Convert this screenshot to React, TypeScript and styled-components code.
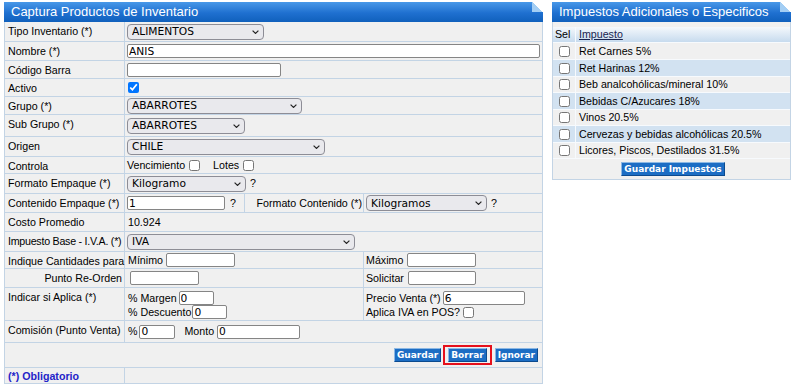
import React from 'react';
import styled, { createGlobalStyle } from 'styled-components';

const line = '#c3d4e5';
const cellBg = '#f0f0f0';
const inputFont = `8pt "DejaVu Sans", Verdana, sans-serif`;

const GlobalStyle = createGlobalStyle`
  body {
    margin: 2px 0 0 4px;
    background: #fff;
    font-family: "Liberation Sans", Arial, sans-serif;
    font-size: 8pt;
    line-height: 13px;
    color: #000;
  }
`;

const Page = styled.div`
  display: flex;
  align-items: flex-start;
  gap: 9px;
`;

const Panel = styled.div<{ $w: number }>`
  width: ${({ $w }) => $w}px;
  flex: none;
`;

const Header = styled.div`
  position: relative;
  height: 20px;
  line-height: 20px;
  padding-left: 7px;
  color: #fff;
  font-size: 13px;
  white-space: nowrap;
  background: linear-gradient(#4898e8, #1f70d0 55%, #1060bc);

  &::after {
    content: '';
    position: absolute;
    top: 0;
    right: 0;
    width: 11px;
    height: 10px;
    background: linear-gradient(to bottom left, #fff 50%, #a3cef4 50%);
  }
`;

const Body = styled.div`
  border: 1px solid ${line};
  border-top: none;
  border-bottom: none;
  background: ${cellBg};
`;

const Row = styled.div<{ $h: number }>`
  display: flex;
  height: ${({ $h }) => $h}px;
  box-sizing: border-box;
  border-bottom: 1px solid ${line};
`;

const Label = styled.div<{ $right?: boolean; $note?: boolean; $tight?: boolean }>`
  width: 120px;
  flex: none;
  box-sizing: border-box;
  border-right: 1px solid ${line};
  padding: 3px 2px 0 3px;
  white-space: nowrap;
  text-align: ${({ $right }) => ($right ? 'right' : 'left')};
  ${({ $note }) => $note && 'color: #2323c8; font-weight: bold; padding-top: 2px;'}
  ${({ $tight }) => $tight && 'letter-spacing: -0.25px;'}
`;

const Cell = styled.div<{ $w?: number; $right?: boolean; $top?: boolean; $pad?: number }>`
  ${({ $w }) => ($w ? `width: ${$w}px; flex: none; border-right: 1px solid ${line};` : 'flex: 1;')}
  box-sizing: border-box;
  display: flex;
  flex-direction: ${({ $top }) => ($top ? 'column' : 'row')};
  align-items: ${({ $top }) => ($top ? 'flex-start' : 'center')};
  justify-content: ${({ $right }) => ($right ? 'flex-end' : 'flex-start')};
  padding: ${({ $top }) => ($top ? '3px' : '0')} ${({ $right }) => ($right ? '1px' : '0')} 0
    ${({ $pad }) => ($pad ?? 2)}px;
  white-space: nowrap;
`;

const Line = styled.div`
  display: flex;
  align-items: center;
  height: 14px;
`;

const Text = styled.span<{ $ml?: number }>`
  margin-left: ${({ $ml }) => $ml ?? 0}px;
`;

const TextInput = styled.input<{ $w: number; $ml?: number }>`
  width: ${({ $w }) => $w}px;
  height: 14px;
  flex: none;
  box-sizing: border-box;
  margin: 0 0 0 ${({ $ml }) => $ml ?? 0}px;
  padding: 0 1px;
  border: 1px solid #858585;
  border-radius: 2px;
  background: #fff;
  font: ${inputFont};
  color: #000;
  outline: none;
`;

const Check = styled.input.attrs({ type: 'checkbox' })<{ $ml?: number }>`
  width: 11px;
  height: 11px;
  flex: none;
  margin: 0 0 0 ${({ $ml }) => $ml ?? 0}px;
  accent-color: #0075ff;
`;

const SelectWrap = styled.span<{ $w: number }>`
  position: relative;
  display: inline-flex;
  flex: none;
  width: ${({ $w }) => $w}px;
  height: 16px;
`;

const SelectBox = styled.select`
  appearance: none;
  width: 100%;
  height: 100%;
  box-sizing: border-box;
  margin: 0;
  padding: 0 14px 0 4px;
  border: 1px solid #8d8d96;
  border-radius: 4px;
  background: #e9e9ed;
  font: ${inputFont};
  color: #000;
  outline: none;
`;

const Chevron = styled.svg`
  position: absolute;
  right: 5px;
  top: 6px;
  width: 7px;
  height: 4px;
  pointer-events: none;
`;

const Help = styled.span<{ $ml?: number }>`
  margin-left: ${({ $ml }) => $ml ?? 4}px;
`;

const ButtonBar = styled.div`
  flex: 1;
  display: flex;
  justify-content: flex-end;
  align-items: center;
  gap: 2px;
  padding-right: 4px;
`;

const Btn = styled.button`
  height: 14px;
  margin: 0;
  padding: 0 2px;
  border: 1px solid;
  border-color: #8cb8e4 #0c4a8e #0c4a8e #8cb8e4;
  background: #1c6dc4;
  color: #fff;
  font: bold 9px "DejaVu Sans", Verdana, sans-serif;
  line-height: 12px;
  cursor: pointer;
`;

const Marked = styled.span`
  display: inline-flex;
  padding: 1px 3px;
  margin-right: 1px;
  border: 2px solid #e5101c;
`;

/* right panel */

const TaxBody = styled.div`
  border: 1px solid ${line};
  border-top: none;
  background: ${cellBg};
`;

const Spacer = styled.div`
  height: 5px;
`;

const TaxRow = styled.div<{ $h: number; $alt?: boolean; $head?: boolean }>`
  display: flex;
  height: ${({ $h }) => $h}px;
  box-sizing: border-box;
  border-bottom: 1px solid #f7fafd;
  background: ${({ $alt, $head }) =>
    $head ? 'linear-gradient(#f4f8fc, #c7dbee)' : $alt ? '#d2e2f1' : cellBg};
`;

const SelCell = styled.div<{ $head?: boolean }>`
  width: 23px;
  flex: none;
  box-sizing: border-box;
  border-right: 1px solid #f7fafd;
  display: flex;
  align-items: center;
  justify-content: ${({ $head }) => ($head ? 'flex-start' : 'center')};
  padding-left: ${({ $head }) => ($head ? 2 : 0)}px;
`;

const TaxName = styled.div<{ $head?: boolean }>`
  flex: 1;
  display: flex;
  align-items: center;
  padding-left: 3px;
  white-space: nowrap;
  ${({ $head }) => $head && 'text-decoration: underline; color: #1a2550;'}
`;

const TaxFooter = styled.div`
  height: 20px;
  display: flex;
  align-items: center;
  justify-content: center;
  padding-left: 3px;
`;

const Select: React.FC<{ w: number; value: string }> = ({ w, value }) => (
  <SelectWrap $w={w}>
    <SelectBox defaultValue={value}>
      <option>{value}</option>
    </SelectBox>
    <Chevron viewBox="0 0 7 4">
      <path d="M0.6 0.6 L3.5 3.4 L6.4 0.6" fill="none" stroke="#222" strokeWidth="1.2" />
    </Chevron>
  </SelectWrap>
);

const taxes = [
  'Ret Carnes 5%',
  'Ret Harinas 12%',
  'Beb analcohólicas/mineral 10%',
  'Bebidas C/Azucares 18%',
  'Vinos 20.5%',
  'Cervezas y bebidas alcohólicas 20.5%',
  'Licores, Piscos, Destilados 31.5%',
];
const taxHeights = [17, 17, 16, 17, 16, 17, 16];

const App: React.FC = () => (
  <>
    <GlobalStyle />
    <Page>
      <Panel $w={539}>
        <Header>Captura Productos de Inventario</Header>
        <Body>
          <Row $h={20}>
            <Label>Tipo Inventario (*)</Label>
            <Cell><Select w={137} value="ALIMENTOS" /></Cell>
          </Row>
          <Row $h={19}>
            <Label>Nombre (*)</Label>
            <Cell><TextInput $w={413} defaultValue="ANIS" /></Cell>
          </Row>
          <Row $h={18}>
            <Label>Código Barra</Label>
            <Cell><TextInput $w={154} /></Cell>
          </Row>
          <Row $h={18}>
            <Label>Activo</Label>
            <Cell><Check defaultChecked $ml={1} /></Cell>
          </Row>
          <Row $h={18}>
            <Label>Grupo (*)</Label>
            <Cell><Select w={175} value="ABARROTES" /></Cell>
          </Row>
          <Row $h={22}>
            <Label>Sub Grupo (*)</Label>
            <Cell><Select w={118} value="ABARROTES" /></Cell>
          </Row>
          <Row $h={20}>
            <Label>Origen</Label>
            <Cell><Select w={198} value="CHILE" /></Cell>
          </Row>
          <Row $h={17}>
            <Label>Controla</Label>
            <Cell>
              <Text>Vencimiento</Text>
              <Check $ml={4} />
              <Text $ml={13}>Lotes</Text>
              <Check $ml={4} />
            </Cell>
          </Row>
          <Row $h={20}>
            <Label>Formato Empaque (*)</Label>
            <Cell>
              <Select w={119} value="Kilogramo" />
              <Help>?</Help>
            </Cell>
          </Row>
          <Row $h={19}>
            <Label>Contenido Empaque (*)</Label>
            <Cell $w={120}>
              <TextInput $w={98} defaultValue="1" />
              <Help $ml={5}>?</Help>
            </Cell>
            <Cell $w={119} $right>Formato Contenido (*)</Cell>
            <Cell>
              <Select w={121} value="Kilogramos" />
              <Help>?</Help>
            </Cell>
          </Row>
          <Row $h={19}>
            <Label>Costo Promedio</Label>
            <Cell $pad={3}>10.924</Cell>
          </Row>
          <Row $h={20}>
            <Label $tight>Impuesto Base - I.V.A. (*)</Label>
            <Cell><Select w={228} value="IVA" /></Cell>
          </Row>
          <Row $h={17}>
            <Label>Indique Cantidades para</Label>
            <Cell $w={239} $pad={3}>
              Mínimo
              <TextInput $w={69} $ml={3} />
            </Cell>
            <Cell $pad={2}>
              Máximo
              <TextInput $w={69} $ml={4} />
            </Cell>
          </Row>
          <Row $h={19}>
            <Label $right>Punto Re-Orden</Label>
            <Cell $w={239} $pad={5}>
              <TextInput $w={69} />
            </Cell>
            <Cell $pad={2}>
              Solicitar
              <TextInput $w={68} $ml={4} />
            </Cell>
          </Row>
          <Row $h={33}>
            <Label>Indicar si Aplica (*)</Label>
            <Cell $w={239} $pad={3} $top>
              <Line>
                % Margen
                <TextInput $w={35} $ml={2} defaultValue="0" />
              </Line>
              <Line>
                % Descuento
                <TextInput $w={35} $ml={1} defaultValue="0" />
              </Line>
            </Cell>
            <Cell $pad={2} $top>
              <Line>
                Precio Venta (*)
                <TextInput $w={82} $ml={2} defaultValue="6" />
              </Line>
              <Line>
                Aplica IVA en POS?
                <Check $ml={3} />
              </Line>
            </Cell>
          </Row>
          <Row $h={22}>
            <Label>Comisión (Punto Venta)</Label>
            <Cell $pad={3}>
              %
              <TextInput $w={36} $ml={2} defaultValue="0" />
              <Text $ml={9}>Monto</Text>
              <TextInput $w={83} $ml={3} defaultValue="0" />
            </Cell>
          </Row>
          <Row $h={25}>
            <ButtonBar>
              <Btn>Guardar</Btn>
              <Marked>
                <Btn>Borrar</Btn>
              </Marked>
              <Btn>Ignorar</Btn>
            </ButtonBar>
          </Row>
          <Row $h={16}>
            <Label $note>(*) Obligatorio</Label>
            <Cell />
          </Row>
        </Body>
      </Panel>

      <Panel $w={239}>
        <Header>Impuestos Adicionales o Especificos</Header>
        <TaxBody>
          <Spacer />
          <TaxRow $h={16} $head>
            <SelCell $head>Sel</SelCell>
            <TaxName $head>Impuesto</TaxName>
          </TaxRow>
          {taxes.map((name, i) => (
            <TaxRow key={name} $h={taxHeights[i]} $alt={i % 2 === 1}>
              <SelCell>
                <Check />
              </SelCell>
              <TaxName>{name}</TaxName>
            </TaxRow>
          ))}
          <TaxFooter>
            <Btn>Guardar Impuestos</Btn>
          </TaxFooter>
        </TaxBody>
      </Panel>
    </Page>
  </>
);

export default App;
